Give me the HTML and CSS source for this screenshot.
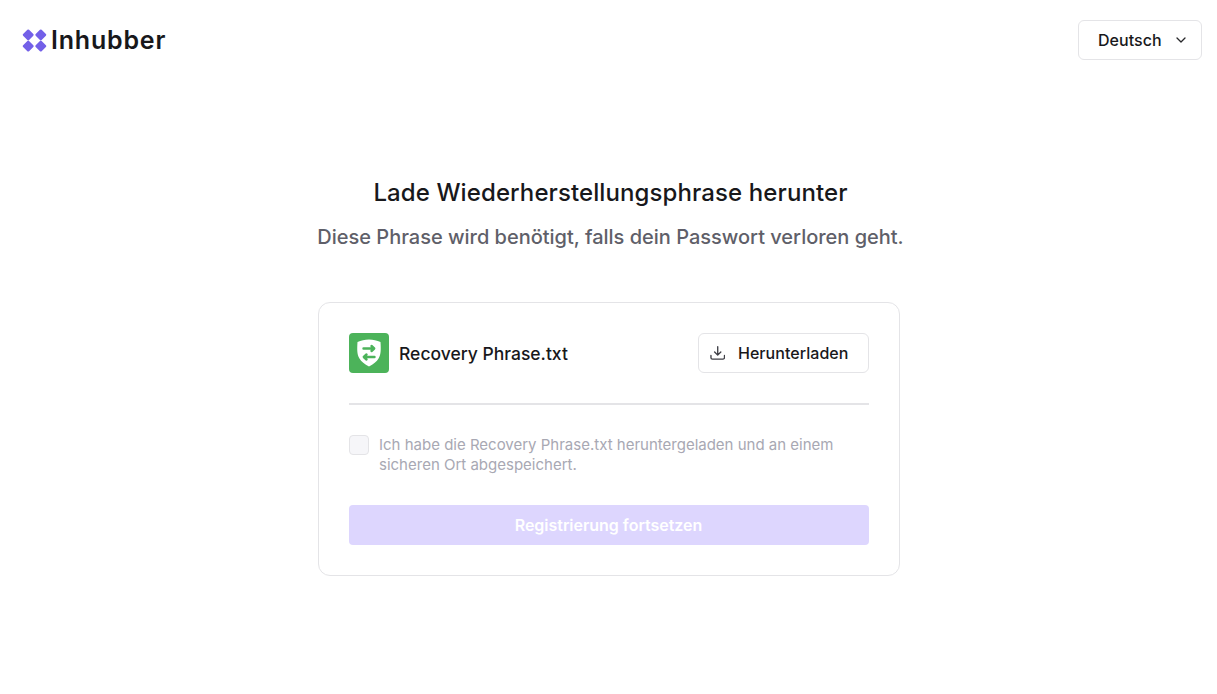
FILE: index.html
```html
<!DOCTYPE html>
<html lang="de">
<head>
<meta charset="utf-8">
<title>Inhubber</title>
<link rel="stylesheet" href="styles.css">
</head>
<body>
<header class="topbar">
  <a class="logo" href="#">
    <svg class="logo-mark" viewBox="0 0 26 24" width="26" height="24" aria-hidden="true">
      <g fill="#7360e8">
        <rect x="2" y="2.700" width="8.400" height="8.400" rx="1.200" transform="rotate(45 6.200 6.900)"/>
        <rect x="14.600" y="2.700" width="8.400" height="8.400" rx="1.200" transform="rotate(45 18.800 6.900)"/>
        <rect x="2" y="13.900" width="8.400" height="8.400" rx="1.200" transform="rotate(45 6.200 18.100)"/>
        <rect x="14.600" y="13.900" width="8.400" height="8.400" rx="1.200" transform="rotate(45 18.800 18.100)"/>
      </g>
    </svg>
    <span class="logo-text">Inhubber</span>
  </a>
  <button class="lang" type="button">
    <span>Deutsch</span>
    <svg viewBox="0 0 10 6" width="10" height="6" aria-hidden="true"><path d="M1 1l4 4 4-4" fill="none" stroke="#27272a" stroke-width="1.300" stroke-linecap="round" stroke-linejoin="round"/></svg>
  </button>
</header>
<main class="content">
  <h1 class="title">Lade Wiederherstellungsphrase herunter</h1>
  <p class="subtitle">Diese Phrase wird benötigt, falls dein Passwort verloren geht.</p>
  <section class="card">
    <div class="file-row">
      <div class="file">
        <span class="file-icon">
          <svg viewBox="0 0 40 40" width="40" height="40" aria-hidden="true">
            <path d="M20 6.500c4.200 0 8 .9 11.500 2.400.5 8 .4 12.500-1.800 16.300-2 3.500-5.300 6-9.700 8.300-4.400-2.300-7.700-4.800-9.700-8.300-2.200-3.800-2.300-8.300-1.800-16.300C12 7.400 15.800 6.500 20 6.500z" fill="#fff"/>
            <path d="M14.500 15.500h10M22.500 13l2.700 2.500-2.700 2.500M25.500 24h-10M17.500 21.500L14.800 24l2.700 2.500" fill="none" stroke="#4cb35a" stroke-width="2.400" stroke-linecap="round" stroke-linejoin="round"/>
          </svg>
        </span>
        <span class="file-name">Recovery Phrase.txt</span>
      </div>
      <button class="download" type="button">
        <svg viewBox="0 0 16 16" width="16" height="16" aria-hidden="true"><path d="M8 1.500v8.500M4.800 7l3.200 3.200L11.200 7M1 10.500v2.300c0 .9.600 1.500 1.500 1.500h11c.9 0 1.500-.6 1.500-1.500v-2.300" fill="none" stroke="#3f3f46" stroke-width="1.400" stroke-linecap="round" stroke-linejoin="round"/></svg>
        <span>Herunterladen</span>
      </button>
    </div>
    <hr class="divider">
    <label class="confirm">
      <span class="checkbox"></span>
      <span class="confirm-text">Ich habe die Recovery Phrase.txt heruntergeladen und an einem sicheren Ort abgespeichert.</span>
    </label>
    <button class="submit" type="button" disabled>Registrierung fortsetzen</button>
  </section>
</main>
</body>
</html>
```
FILE: styles.css
```css
* { box-sizing: border-box; }
html, body { height: 100%; }
body {
  margin: 0;
  background: #fff;
  color: #18181b;
  font-family: Inter, "Liberation Sans", sans-serif;
}
button { font-family: inherit; }

.topbar {
  display: flex;
  justify-content: space-between;
  align-items: center;
  padding: 20px 15px 0 22px;
}
.logo {
  display: flex;
  align-items: center;
  gap: 3px;
  color: #18181b;
  text-decoration: none;
}
.logo-mark { display: block; }
.logo-text {
  font-size: 25px;
  font-weight: 600;
  letter-spacing: 0.8px;
  line-height: 40px;
}
.lang {
  display: flex;
  align-items: center;
  justify-content: space-between;
  width: 124px;
  height: 40px;
  padding: 0 15px 0 19px;
  background: #fff;
  border: 1px solid #e4e4e7;
  border-radius: 6px;
  color: #18181b;
  font-size: 16px;
  font-weight: 500;
  letter-spacing: 0.06px;
}

.content {
  display: flex;
  flex-direction: column;
  align-items: center;
  padding-top: 117px;
}
.title {
  margin: 0;
  padding-left: 4px;
  font-size: 24px;
  line-height: 32px;
  font-weight: 500;
  letter-spacing: 0.1px;
  color: #18181b;
}
.subtitle {
  margin: 14px 0 0;
  padding-left: 4px;
  font-size: 20px;
  line-height: 28px;
  font-weight: 500;
  letter-spacing: -0.01px;
  color: #5f5f69;
}
.card {
  width: 582px;
  margin-top: 51px;
  padding: 30px;
  border: 1px solid #e4e4e7;
  border-radius: 12px;
}
.file-row {
  display: flex;
  justify-content: space-between;
  align-items: center;
}
.file {
  display: flex;
  align-items: center;
  gap: 10.500px;
}
.file-icon {
  display: block;
  width: 40px;
  height: 40px;
  background: #4cb35a;
  border-radius: 4px;
}
.file-icon svg { display: block; }
.file-name {
  padding-top: 1px;
  font-size: 17.500px;
  font-weight: 500;
}
.download {
  display: flex;
  align-items: center;
  gap: 13px;
  width: 171px;
  height: 40px;
  padding: 0 19px 0 11px;
  background: #fff;
  border: 1px solid #e4e4e7;
  border-radius: 6px;
  color: #18181b;
  font-size: 16px;
  font-weight: 500;
  letter-spacing: 0.05px;
}
.download svg { display: block; }
.divider {
  height: 2px;
  margin: 30px 0;
  border: 0;
  background: #e4e4e7;
}
.confirm {
  display: flex;
  gap: 10.500px;
}
.checkbox {
  flex: none;
  width: 20px;
  height: 20px;
  background: #f6f6f9;
  border: 1px solid #e4e4e7;
  border-radius: 4px;
}
.confirm-text {
  font-size: 15px;
  line-height: 20px;
  color: #a8a8b3;
}
.submit {
  display: block;
  width: 100%;
  height: 40px;
  margin-top: 30px;
  padding-left: 6px;
  background: #ddd6fe;
  border: 0;
  border-radius: 4px;
  color: #fff;
  font-size: 16px;
  font-weight: 600;
  letter-spacing: -0.02px;
}
```
